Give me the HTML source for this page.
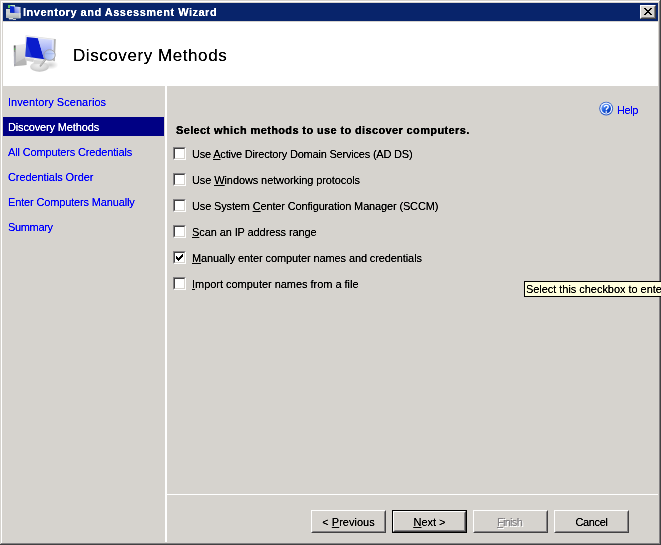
<!DOCTYPE html>
<html><head><meta charset="utf-8">
<style>
html,body{margin:0;padding:0;}
body{width:661px;height:545px;overflow:hidden;position:relative;background:#d6d3ce;font-family:"Liberation Sans",sans-serif;font-size:11px;color:#000;}
.a{position:absolute;}
.t{position:absolute;white-space:nowrap;line-height:13px;filter:url(#th);}
.nav{color:#0000ff;letter-spacing:-0.15px;}
.cb{position:absolute;width:13px;height:13px;box-sizing:border-box;background:#fff;border-style:solid;border-width:1px;border-color:#848284 #fff #fff #848284;}
.cb i{position:absolute;left:0;top:0;right:0;bottom:0;border-style:solid;border-width:1px;border-color:#424142 #d6d3ce #d6d3ce #424142;}
.lbl{letter-spacing:-0.15px;}
.btn{position:absolute;top:510px;width:75px;height:23px;box-sizing:border-box;background:#d6d3ce;border-style:solid;border-width:1px;border-color:#fff #424142 #424142 #fff;}
.btn i{position:absolute;left:0;top:0;right:0;bottom:0;border-style:solid;border-width:1px;border-color:#d6d3ce #848284 #848284 #d6d3ce;}
.btn span{filter:url(#th);position:absolute;left:0;right:0;top:5px;text-align:center;line-height:13px;white-space:nowrap;}
u{text-decoration:underline;text-decoration-thickness:1px;text-underline-offset:1px;}
</style></head>
<body>
<svg width="0" height="0" style="position:absolute"><filter id="th" x="-5%" y="-20%" width="110%" height="140%"><feComponentTransfer><feFuncA type="linear" slope="1.6" intercept="-0.1"/></feComponentTransfer></filter></svg>
<!-- frame -->
<div class="a" style="left:1px;top:1px;width:660px;height:1px;background:#fff"></div>
<div class="a" style="left:1px;top:1px;width:1px;height:543px;background:#fff"></div>
<div class="a" style="left:659px;top:1px;width:1px;height:543px;background:#848284"></div>
<div class="a" style="left:1px;top:543px;width:659px;height:1px;background:#848284"></div>
<div class="a" style="left:660px;top:0;width:1px;height:545px;background:#424142"></div>
<div class="a" style="left:0;top:544px;width:661px;height:1px;background:#424142"></div>

<!-- title bar -->
<div class="a" style="left:3px;top:3px;width:655px;height:18px;background:#08246b"></div>
<svg class="a" style="left:5px;top:4px" width="17" height="17" viewBox="5 4 17 17">
<defs><linearGradient id="ti1" x1="0" y1="0" x2="0" y2="1"><stop offset="0" stop-color="#d4d8d8"/><stop offset="1" stop-color="#a8b0b0"/></linearGradient>
<linearGradient id="ti2" x1="1" y1="0" x2="0" y2="1"><stop offset="0" stop-color="#e0e4fc"/><stop offset="1" stop-color="#5868e0"/></linearGradient></defs>
<rect x="8" y="5" width="7" height="2.2" fill="#c8e8c0"/>
<rect x="8" y="5" width="2.5" height="3" fill="#58c858"/>
<polygon points="6,9 10,9 10,18 6,18" fill="url(#ti1)"/>
<polygon points="6,12.5 20.5,13 20.5,18.5 9,18.5 6,17.5" fill="url(#ti1)"/>
<polygon points="10,6 14.2,6.4 14.5,13 10,12.5" fill="#0a28d0"/>
<polygon points="14.2,6.4 19.8,7 19.8,13.2 14.5,13" fill="url(#ti2)"/>
<polygon points="19.5,7 20.5,7 20.5,18 19.5,18" fill="#e4e4e4"/>
<rect x="9" y="18" width="4" height="1.4" fill="#d8dcdc"/>
<rect x="13" y="19" width="3" height="1" fill="#c8cccc"/>
</svg>
<div class="t" style="left:23px;top:6px;color:#fff;font-weight:bold;letter-spacing:0.5px">Inventory and Assessment Wizard</div>
<!-- close button -->
<div class="a" style="left:640px;top:5px;width:16px;height:14px;box-sizing:border-box;background:#d6d3ce;border-style:solid;border-width:1px;border-color:#fff #424142 #424142 #fff;">
  <div class="a" style="left:0;top:0;right:0;bottom:0;border-style:solid;border-width:1px;border-color:#d6d3ce #848284 #848284 #d6d3ce;"></div>
  <svg class="a" style="left:3px;top:2px" width="8" height="7" viewBox="0 0 8 7" shape-rendering="crispEdges"><path d="M0 0h1v1h-1zM1 0h1v1h-1zM6 0h1v1h-1zM7 0h1v1h-1zM1 1h1v1h-1zM2 1h1v1h-1zM5 1h1v1h-1zM6 1h1v1h-1zM2 2h1v1h-1zM3 2h1v1h-1zM4 2h1v1h-1zM5 2h1v1h-1zM3 3h1v1h-1zM4 3h1v1h-1zM2 4h1v1h-1zM3 4h1v1h-1zM4 4h1v1h-1zM5 4h1v1h-1zM1 5h1v1h-1zM2 5h1v1h-1zM5 5h1v1h-1zM6 5h1v1h-1zM0 6h1v1h-1zM1 6h1v1h-1zM6 6h1v1h-1zM7 6h1v1h-1z" fill="#000"/></svg>
</div>

<!-- header -->
<div class="a" style="left:3px;top:22px;width:655px;height:64px;background:#fff"></div>
<svg class="a" style="left:8px;top:28px" width="56" height="52" viewBox="8 28 56 52">
<defs>
<linearGradient id="tw" x1="0" y1="0" x2="0" y2="1"><stop offset="0" stop-color="#eaeaea"/><stop offset="0.5" stop-color="#d4d4d4"/><stop offset="1" stop-color="#bcbcbc"/></linearGradient>
<linearGradient id="strip" x1="0" y1="0" x2="0" y2="1"><stop offset="0" stop-color="#505050"/><stop offset="0.2" stop-color="#8a8a8a"/><stop offset="1" stop-color="#a8a8b0"/></linearGradient>
<linearGradient id="scrL" x1="0" y1="0" x2="0" y2="1"><stop offset="0" stop-color="#d8defc"/><stop offset="0.5" stop-color="#a8b4f6"/><stop offset="1" stop-color="#5a70e4"/></linearGradient>
<linearGradient id="glass" x1="0" y1="0" x2="1" y2="0"><stop offset="0" stop-color="#98b0ec"/><stop offset="0.7" stop-color="#c0d0f6"/><stop offset="1" stop-color="#e8eefc"/></linearGradient>
<radialGradient id="base" cx="0.45" cy="0.35" r="0.65"><stop offset="0" stop-color="#f0f0f0"/><stop offset="0.6" stop-color="#dadada"/><stop offset="1" stop-color="#c0c0c0"/></radialGradient>
<radialGradient id="shd" cx="0.4" cy="0.5" r="0.5"><stop offset="0" stop-color="#000" stop-opacity="0.2"/><stop offset="1" stop-color="#000" stop-opacity="0"/></radialGradient>
</defs>
<ellipse cx="52" cy="65" rx="8" ry="4.5" fill="url(#shd)"/>
<polygon points="13.8,45.6 26,43.8 26.5,65 14,66.2" fill="url(#tw)"/>
<polygon points="13.8,45.6 15.6,45.4 15.8,66.1 14,66.2" fill="url(#strip)"/>
<line x1="14.7" y1="52" x2="14.9" y2="64" stroke="#d8dcf0" stroke-width="0.5"/>
<rect x="14" y="48.6" width="1.4" height="1.2" fill="#50c050"/>
<polygon points="15.8,63 26.5,57 26.5,65 15.8,66.1" fill="#a8a8a8" opacity="0.5"/>
<polygon points="25,57.5 34,59 33,62 25.5,60.5" fill="#d0d0d0"/>
<ellipse cx="39.5" cy="66.8" rx="9.4" ry="4.9" fill="url(#base)"/>
<polygon points="33,60 45,60.5 44,64 34,64" fill="#d8d8d8"/>
<polygon points="25.6,35.2 55.7,39 54.8,61.2 25,58.4" fill="#dcdcdc"/>
<polygon points="26,35.8 54.5,39.4 54,60.5 25.6,57.6" fill="#efefef"/>
<polygon points="53.8,39.2 55.7,39 54.8,61.2 53,60.6" fill="#b0b0b0"/>
<polygon points="26.7,36.9 38,38.2 44.2,59.3 25.4,56.6" fill="#0a1ccc"/>
<polygon points="26.4,41.5 32,57.2 25.4,56.6" fill="#3048d8" opacity="0.75"/>
<polygon points="38,38.2 53.6,39.9 52.9,60 44.2,59.3" fill="url(#scrL)"/>
<polygon points="52,39.8 53.6,39.9 52.9,60 51.2,59.9" fill="#e8ecff" opacity="0.7"/>
<line x1="45.4" y1="59.4" x2="40.5" y2="65.8" stroke="#a0a0a0" stroke-width="1.8" stroke-linecap="round"/>
<line x1="45" y1="59.6" x2="40.4" y2="65.4" stroke="#e8e8e8" stroke-width="0.6"/>
<ellipse cx="49.6" cy="55" rx="5.6" ry="5.3" fill="url(#glass)" stroke="#a4a4a8" stroke-width="1"/>
<rect x="44.6" y="53.2" width="10" height="1" fill="#8ea4e4" opacity="0.5"/>
</svg>
<div class="t" style="left:73px;top:46px;font-size:17px;line-height:20px;letter-spacing:0.57px">Discovery Methods</div>

<!-- left nav -->
<div class="a" style="left:165px;top:86px;width:2px;height:456px;background:#fff"></div>
<div class="a" style="left:3px;top:117px;width:161px;height:19px;background:#000084"></div>
<div class="t nav" style="left:8px;top:96px;letter-spacing:0.05px">Inventory Scenarios</div>
<div class="t nav" style="left:8px;top:121px;color:#fff">Discovery Methods</div>
<div class="t nav" style="left:8px;top:146px">All Computers Credentials</div>
<div class="t nav" style="left:8px;top:171px;letter-spacing:-0.09px">Credentials Order</div>
<div class="t nav" style="left:8px;top:196px">Enter Computers Manually</div>
<div class="t nav" style="left:8px;top:221px;letter-spacing:-0.35px">Summary</div>

<!-- content -->
<svg class="a" style="left:598px;top:100px" width="17" height="17" viewBox="598 100 17 17">
<defs><linearGradient id="hg" x1="0.2" y1="0.1" x2="0.8" y2="0.9"><stop offset="0" stop-color="#6a9cf8"/><stop offset="0.5" stop-color="#2060e0"/><stop offset="1" stop-color="#0030b0"/></linearGradient></defs>
<circle cx="606.2" cy="108.6" r="6.9" fill="#2858c8"/>
<circle cx="606.2" cy="108.6" r="6.0" fill="#f4f8ff"/>
<circle cx="606.2" cy="108.6" r="4.8" fill="url(#hg)"/>
<path d="M604.4 107.2 Q604.4 105.4 606.3 105.4 Q608.2 105.4 608.2 107 Q608.2 108 607 108.7 Q606.3 109.1 606.3 110.2" stroke="#fff" stroke-width="1.4" fill="none"/>
<rect x="605.5" y="111.3" width="1.6" height="1.5" fill="#fff"/>
</svg>
<div class="t" style="left:617px;top:104px;color:#0000ff;letter-spacing:-0.4px">Help</div>
<div class="t" style="left:176px;top:124px;font-weight:bold;letter-spacing:0.37px;-webkit-text-stroke:0.15px #000">Select which methods to use to discover computers.</div>

<div class="cb" style="left:173px;top:147px"><i></i></div>
<div class="t lbl" style="left:192px;top:148px;letter-spacing:-0.2px">Use <u>A</u>ctive Directory Domain Services (AD DS)</div>
<div class="cb" style="left:173px;top:173px"><i></i></div>
<div class="t lbl" style="left:192px;top:174px;letter-spacing:-0.1px">Use <u>W</u>indows networking protocols</div>
<div class="cb" style="left:173px;top:199px"><i></i></div>
<div class="t lbl" style="left:192px;top:200px">Use System <u>C</u>enter Configuration Manager (SCCM)</div>
<div class="cb" style="left:173px;top:225px"><i></i></div>
<div class="t lbl" style="left:192px;top:226px;letter-spacing:-0.1px"><u>S</u>can an IP address range</div>
<div class="cb" style="left:173px;top:251px"><i></i><svg class="a" style="left:2px;top:2px" width="7" height="7" viewBox="0 0 7 7" shape-rendering="crispEdges"><path d="M0 2h1v3h-1zM1 3h1v3h-1zM2 4h1v3h-1zM3 3h1v3h-1zM4 2h1v3h-1zM5 1h1v3h-1zM6 0h1v3h-1z" fill="#000"/></svg></div>
<div class="t lbl" style="left:192px;top:252px;letter-spacing:-0.11px"><u>M</u>anually enter computer names and credentials</div>
<div class="cb" style="left:173px;top:277px"><i></i></div>
<div class="t lbl" style="left:192px;top:278px;letter-spacing:-0.03px"><u>I</u>mport computer names from a file</div>

<!-- tooltip -->
<div class="a" style="left:524px;top:281px;width:137px;height:16px;box-sizing:border-box;background:#ffffde;border:1px solid #000;border-right:none"></div>
<div class="t" style="left:526px;top:283px;letter-spacing:-0.04px">Select this checkbox to ente</div>

<!-- separator -->
<div class="a" style="left:167px;top:494px;width:491px;height:1px;background:#fff"></div>

<!-- buttons -->
<div class="btn" style="left:311px"><i></i><span>&lt; <u>P</u>revious</span></div>
<div class="btn" style="left:392px;border:1px solid #000;"><div class="a" style="left:0;top:0;right:0;bottom:0;border-style:solid;border-width:1px;border-color:#fff #424142 #424142 #fff;"><div class="a" style="left:0;top:0;right:0;bottom:0;border-style:solid;border-width:1px;border-color:#d6d3ce #848284 #848284 #d6d3ce;"></div></div><span><u>N</u>ext &gt;</span></div>
<div class="btn" style="left:473px"><i></i><span style="color:#848284;text-shadow:1px 1px 0 #fff;letter-spacing:-0.7px;left:-2px"><u>F</u>inish</span></div>
<div class="btn" style="left:554px"><i></i><span style="letter-spacing:-0.4px">Cancel</span></div>

</body></html>
